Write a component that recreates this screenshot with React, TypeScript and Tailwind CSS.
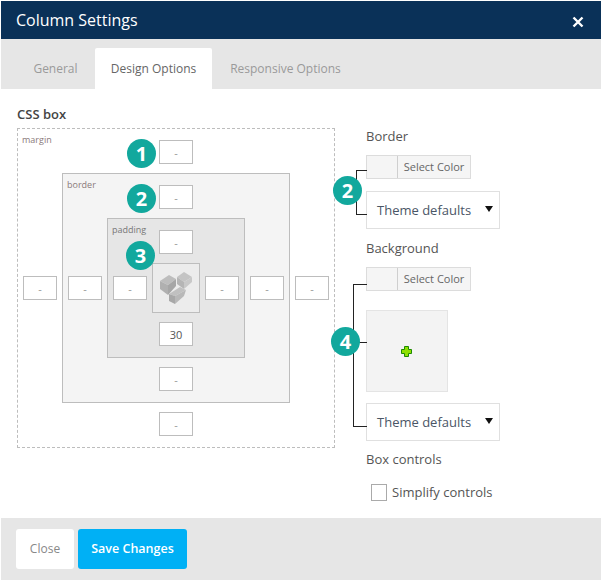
const font = "font-['Open_Sans',sans-serif]"

function ValueInput({ value = "-" }: { value?: string }) {
  return (
    <div className={`flex h-6 w-[34px] shrink-0 items-center justify-center border border-[#bdbdbd] bg-white text-[11px] leading-none ${value === "-" ? "text-[#999]" : "text-[#555]"}`}>
      {value}
    </div>
  )
}

function Badge({ n, className }: { n: number; className: string }) {
  return (
    <div className={`absolute z-10 flex h-[29px] w-[29px] items-center justify-center rounded-full bg-[#12a89d] text-[20px] font-bold leading-none text-white ${className}`}>
      {n}
    </div>
  )
}

function Line({ className }: { className: string }) {
  return <div className={`absolute bg-[#222] ${className}`} />
}

function SelectColor() {
  return (
    <div className="flex h-6 w-[105px] border border-[#dcdcdc] bg-[#f5f5f5] text-[11px] text-[#666]">
      <div className="w-[31px] border-r border-[#cfcfcf]" />
      <div className="flex flex-1 items-center justify-center">Select Color</div>
    </div>
  )
}

function ThemeSelect() {
  return (
    <div className="flex h-[38px] w-[134px] items-center justify-between border border-[#e0e0e0] bg-white pl-[10px] pr-[6px] pt-px text-[13px] text-[#4a5666]">
      <span>Theme defaults</span>
      <svg width="8" height="6" viewBox="0 0 8 6" className="mb-[3px]"><path d="M0 0h8L4 6z" fill="#111" /></svg>
    </div>
  )
}

function CubeLogo() {
  return (
    <svg width="32" height="32" viewBox="0 0 32 32">
      <path d="M0 9l9-6 7 4-8 6z" fill="#bdbdbd" />
      <path d="M0 9l8 4v10l-8-6z" fill="#b0b0b0" />
      <path d="M8 13l8-6v7l-8 9z" fill="#a6a6a6" />
      <path d="M17 5l7-5 8 5-8 5z" fill="#c4c4c4" />
      <path d="M17 5l7 5v7l-7-5z" fill="#b5b5b5" />
      <path d="M24 10l8-5v5l-8 7z" fill="#c8c8c8" />
      <path d="M9 22l11-7 6 3-11 6z" fill="#c0c0c0" />
      <path d="M9 22l6 2v8l-6-3z" fill="#a8a8a8" />
      <path d="M15 24l11-6-2 6-9 8z" fill="#b8b8b8" />
    </svg>
  )
}

export default function App() {
  return (
    <div className={`${font} relative h-[582px] w-[602px] overflow-hidden bg-white p-px`}>
      <div className="flex h-[38px] items-center justify-between bg-[#0a3158] pl-[15px] pr-[17px] text-white">
        <span className="text-[16px]">Column Settings</span>
        <svg width="12" height="12" viewBox="0 0 12 12" className="mt-[3px]"><path d="M1.5 1.5l9 9M10.5 1.5l-9 9" stroke="#fff" strokeWidth="2.4" /></svg>
      </div>

      <div className="flex h-[50px] items-end bg-[#e6e6e6] pl-[15px] text-[12px] text-[#9a9a9a]">
        <div className="flex h-[41px] w-[79px] items-center justify-center">General</div>
        <div className="flex h-[41px] w-[117px] items-center justify-center rounded-t-[2px] bg-white text-[#666]">Design Options</div>
        <div className="flex h-[41px] w-[147px] items-center justify-center">Responsive Options</div>
      </div>

      <div className="flex h-[429px] pl-4 pt-[16px]">
        <div className="w-[349px]">
          <div className="h-[23px] text-[13px] font-semibold leading-[18px] text-[#444]">CSS box</div>
          <div className="relative flex h-[320px] w-[318px] flex-col items-center justify-between border border-dashed border-[#bdbdbd] pb-[11px] pt-[11px]">
            <span className="absolute left-[4px] top-[4px] text-[9px] text-[#8a7a7a]">margin</span>
            <ValueInput />
            <div className="flex items-center gap-[5px]">
              <ValueInput />
              <div className="relative flex h-[230px] w-[228px] flex-col items-center justify-between border border-[#bdbdbd] bg-[#f4f4f4] py-[11px]">
                <span className="absolute left-[4px] top-[4px] text-[9px] text-[#8a7a7a]">border</span>
                <ValueInput />
                <div className="flex items-center gap-[5px]">
                  <ValueInput />
                  <div className="relative flex h-[140px] w-[138px] flex-col items-center justify-between border border-[#bdbdbd] bg-[#e6e6e6] py-[11px]">
                    <span className="absolute left-[4px] top-[4px] text-[9px] text-[#777]">padding</span>
                    <ValueInput />
                    <div className="flex items-center gap-[5px]">
                      <ValueInput />
                      <div className="flex h-[50px] w-[48px] items-center justify-center border border-[#bdbdbd] bg-[#ececec]">
                        <CubeLogo />
                      </div>
                      <ValueInput />
                    </div>
                    <ValueInput value="30" />
                  </div>
                  <ValueInput />
                </div>
                <ValueInput />
              </div>
              <ValueInput />
            </div>
            <ValueInput />
          </div>
        </div>

        <div className="pt-[22px] text-[13px] text-[#555]">
          <div className="h-[28px]">Border</div>
          <SelectColor />
          <div className="mt-3"><ThemeSelect /></div>
          <div className="mb-[6px] mt-[9px] h-[23px] leading-[20px]">Background</div>
          <SelectColor />
          <div className="mt-[19px] flex h-[82px] w-[82px] items-center justify-center border border-[#e4e4e4] bg-[#f3f3f3] pr-[2px]">
            <svg width="11" height="11" viewBox="0 0 11 11"><path d="M3.5.5h4v3h3v4h-3v3h-4v-3h-3v-4h3z" fill="#8ee000" stroke="#1d8a00" /></svg>
          </div>
          <div className="mt-[11px]"><ThemeSelect /></div>
          <div className="mt-[9px] h-[26px] leading-[18px]">Box controls</div>
          <div className="flex items-center gap-[5px] pl-[5px] pt-[7px]">
            <div className="h-[17px] w-4 border border-[#aaa] bg-white" />
            <span>Simplify controls</span>
          </div>
        </div>
      </div>

      <div className="flex h-[62px] items-start gap-1 bg-[#e6e6e6] pl-[15px] pt-[11px] text-[12px]">
        <div className="flex h-10 w-[58px] items-center justify-center rounded-[3px] bg-white text-[#888]">Close</div>
        <div className="flex h-10 w-[109px] items-center justify-center rounded-[3px] bg-[#00b0f5] text-[12.5px] font-semibold text-white">Save Changes</div>
      </div>

      <Badge n={1} className="left-[127px] top-[139px]" />
      <Badge n={2} className="left-[127px] top-[184px]" />
      <Badge n={3} className="left-[126px] top-[241px]" />

      <Line className="left-[356px] top-[170px] h-[45px] w-px" />
      <Line className="left-[356px] top-[170px] h-px w-[11px]" />
      <Line className="left-[356px] top-[214px] h-px w-[11px]" />
      <Badge n={2} className="left-[333px] top-[176px]" />

      <Line className="left-[353px] top-[284px] h-[143px] w-px" />
      <Line className="left-[353px] top-[284px] h-px w-[14px]" />
      <Line className="left-[353px] top-[342px] h-px w-[14px]" />
      <Line className="left-[353px] top-[426px] h-px w-[14px]" />
      <Badge n={4} className="left-[331px] top-[327px]" />
    </div>
  )
}
